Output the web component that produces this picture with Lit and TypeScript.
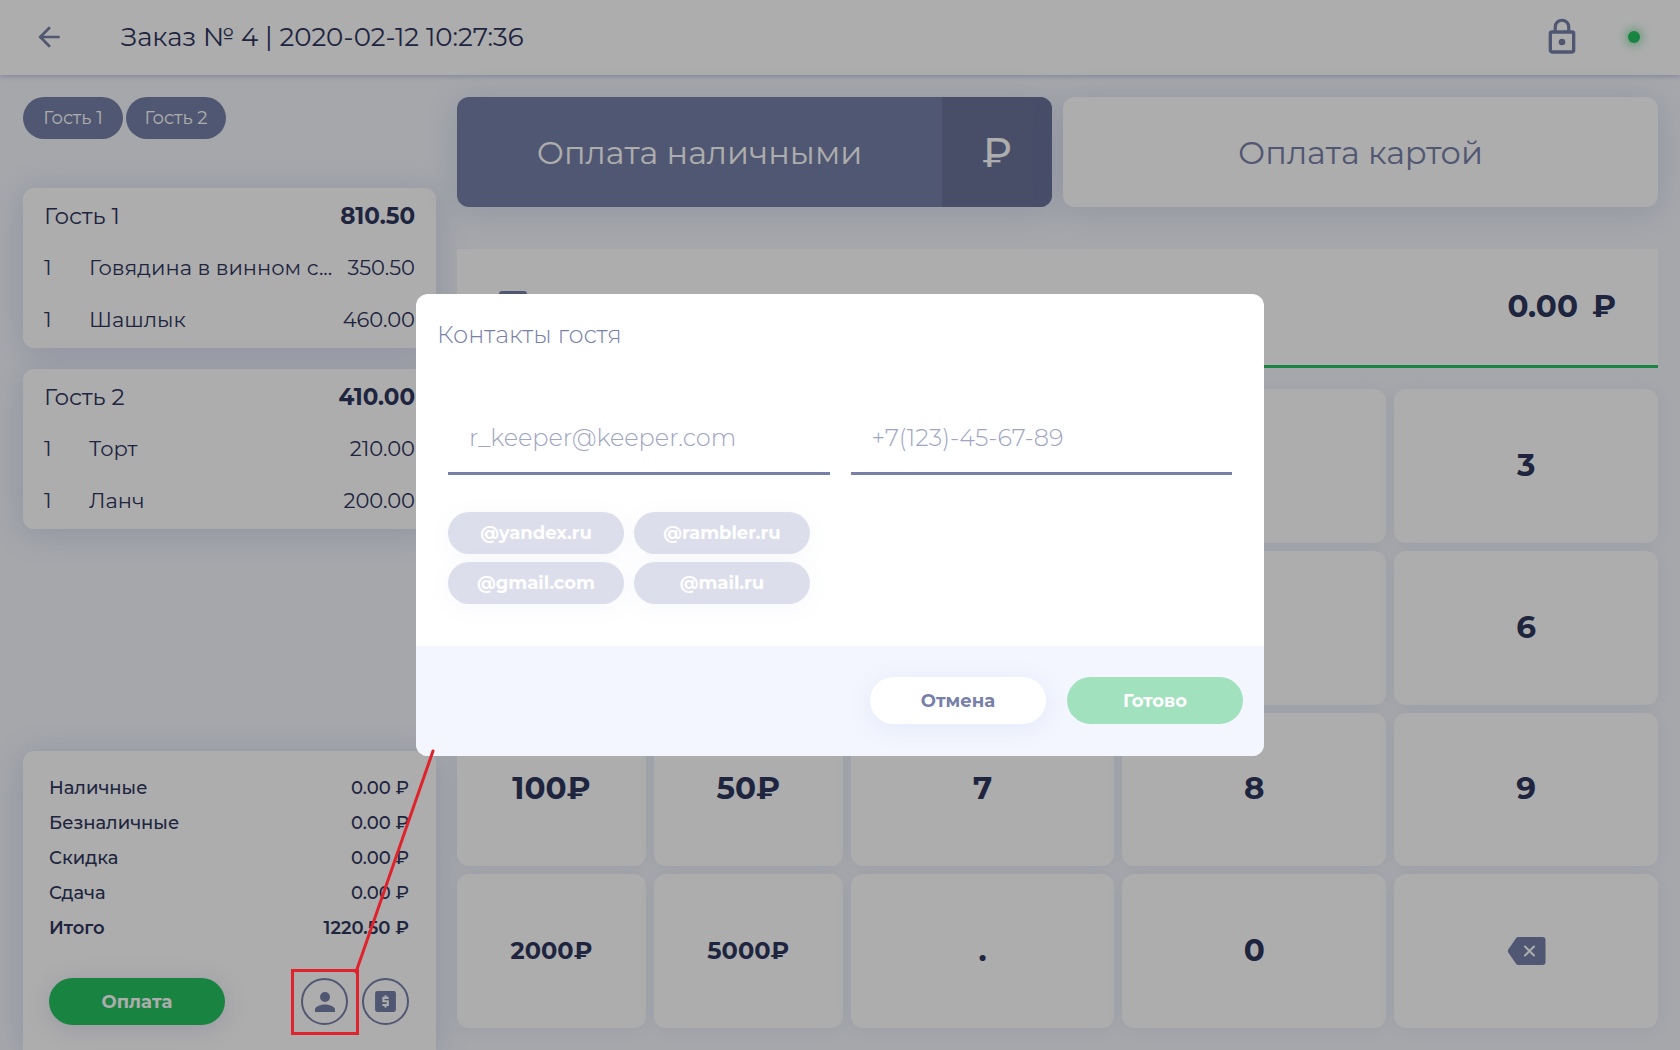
import { LitElement, html, css, svg, nothing } from "lit";
import { customElement, property, state } from "lit/decorators.js";
import { classMap } from "lit/directives/class-map.js";

interface OrderLine {
  qty: number;
  name: string;
  price: string;
}

interface Guest {
  name: string;
  total: string;
  lines: OrderLine[];
}

const GUESTS: Guest[] = [
  {
    name: "Гость 1",
    total: "810.50",
    lines: [
      { qty: 1, name: "Говядина в винном с...", price: "350.50" },
      { qty: 1, name: "Шашлык", price: "460.00" },
    ],
  },
  {
    name: "Гость 2",
    total: "410.00",
    lines: [
      { qty: 1, name: "Торт", price: "210.00" },
      { qty: 1, name: "Ланч", price: "200.00" },
    ],
  },
];

const TOTALS: [string, string][] = [
  ["Наличные", "0.00 ₽"],
  ["Безналичные", "0.00 ₽"],
  ["Скидка", "0.00 ₽"],
  ["Сдача", "0.00 ₽"],
  ["Итого", "1220.50 ₽"],
];

const KEYS: string[] = [
  "1000₽", "500₽", "1", "2", "3",
  "200₽", "10₽", "4", "5", "6",
  "100₽", "50₽", "7", "8", "9",
  "2000₽", "5000₽", ".", "0", "back",
];

const ICONS = {
  arrow: svg`<path d="M20 11H7.8l5.6-5.6L12 4l-8 8 8 8 1.4-1.4L7.8 13H20z" fill="currentColor"/>`,
  lock: svg`<path fill="currentColor" d="M12 17a2 2 0 1 0 0-4 2 2 0 0 0 0 4zm6-9h-1V6A5 5 0 0 0 7 6v2H6a2 2 0 0 0-2 2v10c0 1.1.9 2 2 2h12a2 2 0 0 0 2-2V10a2 2 0 0 0-2-2zM8.9 6a3.1 3.1 0 0 1 6.2 0v2H8.9zM18 20H6V10h12z"/>`,
  person: svg`<path fill="currentColor" d="M12 12a4 4 0 1 0 0-8 4 4 0 0 0 0 8zm0 2c-2.7 0-8 1.3-8 4v2h16v-2c0-2.7-5.3-4-8-4z"/>`,
  receipt: svg`<rect x="2" y="2" width="20" height="20" rx="2" fill="currentColor"/>
    <path d="M15 8.5H10V11.8h4.2v3.5H9M12 6v2.5M12 15.3v2.5" fill="none" stroke="#fff" stroke-width="2"/>`,
  backspace: svg`<path fill="currentColor" d="M11 0h24a3 3 0 0 1 3 3v22a3 3 0 0 1-3 3H11a3 3 0 0 1-2.5-1.3L.8 15.6a3 3 0 0 1 0-3.2L8.5 1.3A3 3 0 0 1 11 0z"/>
    <path d="M17.5 9.5l9 9M26.5 9.5l-9 9" stroke="#fff" stroke-width="2" stroke-linecap="round"/>`,
};

const shared = css`
  * {
    box-sizing: border-box;
  }
  button,
  input {
    font: inherit;
    color: inherit;
    border: 0;
    margin: 0;
    padding: 0;
    background: none;
  }
  button {
    cursor: pointer;
  }
  svg {
    display: block;
  }
`;

@customElement("guest-card")
class GuestCard extends LitElement {
  static styles = [
    shared,
    css`
      :host {
        display: block;
        background: #fff;
        border-radius: 11px;
        box-shadow: 0 4px 32px rgba(105, 115, 190, 0.22);
        padding: 0 21px 3px;
      }
      .lines {
        width: 100%;
        border-collapse: collapse;
        table-layout: fixed;
        font-size: 21px;
        white-space: nowrap;
      }
      .qty {
        width: 45px;
      }
      .sum {
        width: 80px;
      }
      td,
      th {
        height: 52px;
        padding: 0;
        text-align: left;
        font-weight: 400;
      }
      .head th,
      .head td {
        height: 53px;
        padding-top: 2px;
        font-size: 23px;
      }
      td.money {
        text-align: right;
      }
      .head td.money {
        font-weight: 700;
      }
    `,
  ];

  @property({ attribute: false }) guest!: Guest;

  render() {
    const g = this.guest;
    return html`<table class="lines">
      <colgroup>
        <col class="qty" />
        <col />
        <col class="sum" />
      </colgroup>
      <tr class="head">
        <th colspan="2">${g.name}</th>
        <td class="money">${g.total}</td>
      </tr>
      ${g.lines.map(
        (l) => html`<tr>
          <td>${l.qty}</td>
          <td>${l.name}</td>
          <td class="money">${l.price}</td>
        </tr>`
      )}
    </table>`;
  }
}

@customElement("contacts-dialog")
class ContactsDialog extends LitElement {
  static styles = [
    shared,
    css`
      :host {
        display: block;
        width: min(848px, 94%);
        background: #fff;
        border-radius: 12px;
        overflow: hidden;
      }
      .title {
        margin: 0;
        padding: 24px 21px 0;
        font-size: 24px;
        line-height: 34px;
        font-weight: 300;
        color: #7780a8;
      }
      .body {
        padding: 50px 32px 42px;
      }
      .fields {
        display: grid;
        grid-template-columns: 1fr 1fr;
        gap: 21px;
      }
      .field {
        width: 100%;
        height: 73px;
        padding: 0 21px;
        border-bottom: 3px solid #7880a8;
        font-size: 24px;
        font-weight: 300;
        color: #2e365e;
        outline: none;
      }
      .field::placeholder {
        color: #a0a5c4;
        opacity: 1;
      }
      .domains {
        display: grid;
        grid-template-columns: 176px 176px;
        gap: 8px 10px;
        margin-top: 37px;
      }
      .domain {
        height: 42px;
        border-radius: 21px;
        background: #dddeeb;
        color: #fff;
        font-size: 18px;
        font-weight: 700;
        box-shadow: 0 4px 24px rgba(105, 115, 190, 0.05);
      }
      .foot {
        display: flex;
        justify-content: flex-end;
        gap: 21px;
        padding: 31px 21px 32px;
        background: #f3f6fe;
      }
      .action {
        width: 176px;
        height: 47px;
        border-radius: 24px;
        font-size: 18px;
        font-weight: 700;
      }
      .cancel {
        background: #fff;
        color: #7780a8;
        box-shadow: 0 4px 24px rgba(105, 115, 220, 0.1);
      }
      .done {
        background: #a1e1be;
        color: #fff;
      }
    `,
  ];

  render() {
    return html`
      <h2 class="title">Контакты гостя</h2>
      <div class="body">
        <div class="fields">
          <input class="field" type="email" aria-label="Email" placeholder="r_keeper@keeper.com" />
          <input class="field" type="tel" aria-label="Телефон" placeholder="+7(123)-45-67-89" />
        </div>
        <div class="domains">
          ${["@yandex.ru", "@rambler.ru", "@gmail.com", "@mail.ru"].map(
            (d) => html`<button class="domain" type="button">${d}</button>`
          )}
        </div>
      </div>
      <div class="foot">
        <button class="action cancel" type="button">Отмена</button>
        <button class="action done" type="button">Готово</button>
      </div>
    `;
  }
}

@customElement("app-root")
class AppRoot extends LitElement {
  static styles = [
    shared,
    css`
      :host {
        display: flex;
        flex-direction: column;
        position: relative;
        height: 100vh;
        min-height: 960px;
        overflow: hidden;
        background: #f3f6fc;
        color: #2e365e;
        font-family: Montserrat, Inter, "Noto Sans", sans-serif;
      }
      .bar {
        display: flex;
        align-items: center;
        height: 75px;
        flex: none;
        padding: 0 40px 1px 32px;
        background: #fff;
        box-shadow: 0 2px 4px rgba(105, 115, 190, 0.3);
      }
      .back {
        margin-right: 55px;
        color: #7780a8;
      }
      .heading {
        flex: 1;
        margin: 0;
        font-size: 26px;
        font-weight: 400;
      }
      .lock {
        color: #7780a8;
        margin-right: 46px;
      }
      .online {
        width: 12px;
        height: 12px;
        border-radius: 50%;
        background: #26c161;
        box-shadow: 0 0 12px #26c161;
      }
      .main {
        flex: 1;
        min-height: 0;
        display: grid;
        grid-template-columns: minmax(0, 413fr) minmax(0, 1201fr);
        gap: 21px;
        padding: 0 22px 0 23px;
      }
      .order {
        display: flex;
        flex-direction: column;
        min-height: 0;
        padding-top: 22px;
      }
      .tabs {
        display: flex;
        gap: 3px;
        margin-bottom: 49px;
      }
      .tab {
        width: 100px;
        height: 42px;
        border-radius: 21px;
        background: #7780a8;
        color: #fff;
        font-size: 18px;
      }
      .guests {
        display: flex;
        flex-direction: column;
        gap: 21px;
        flex: 1;
      }
      .summary {
        padding: 19px 27px 25px 26px;
        background: #fff;
        border-radius: 11px 11px 0 0;
        box-shadow: 0 4px 32px rgba(105, 115, 190, 0.22);
      }
      .totals {
        width: 100%;
        border-collapse: collapse;
        font-size: 18px;
      }
      .totals th,
      .totals td {
        height: 35px;
        padding: 0;
        text-align: left;
        font-weight: 500;
      }
      .totals td {
        text-align: right;
      }
      .totals tr:last-child > * {
        font-weight: 600;
      }
      .actions {
        display: flex;
        align-items: center;
        gap: 14px;
        margin-top: 33px;
      }
      .pay {
        width: 176px;
        height: 47px;
        margin-right: auto;
        border-radius: 24px;
        background: #26c161;
        color: #fff;
        font-size: 18px;
        font-weight: 700;
        box-shadow: 0 4px 24px rgba(105, 115, 190, 0.2);
      }
      .round {
        display: grid;
        place-items: center;
        width: 47px;
        height: 47px;
        border: 2px solid #7780a8;
        border-radius: 50%;
        color: #7780a8;
      }
      .marked {
        position: relative;
      }
      .marker {
        position: absolute;
        z-index: 3;
        inset: -9px -11px -10px -10px;
        border: 3px solid #e0222c;
        pointer-events: none;
      }
      .leader {
        position: absolute;
        left: 100%;
        bottom: 100%;
        overflow: visible;
      }
      .payment {
        display: flex;
        flex-direction: column;
        min-height: 0;
        padding: 22px 0;
      }
      .methods {
        display: grid;
        grid-template-columns: 1fr 1fr;
        gap: 11px;
        margin-bottom: 42px;
      }
      .method {
        display: flex;
        height: 110px;
        border-radius: 12px;
        overflow: hidden;
        background: #fff;
        color: #7780a8;
        font-size: 32px;
        align-items: stretch;
        box-shadow: 0 4px 32px rgba(105, 115, 190, 0.2);
      }
      .method.active {
        background: #7780a8;
        color: #fff;
      }
      .method-name {
        flex: 1;
        display: grid;
        place-items: center;
      }
      .method-sign {
        width: 110px;
        display: grid;
        place-items: center;
        background: #6a739a;
        font-size: 40px;
        font-weight: 500;
      }
      .amount {
        display: flex;
        align-items: center;
        gap: 14px;
        height: 119px;
        padding: 0 42px 2px;
        background: #fff;
        border-bottom: 3px solid #26c161;
        font-size: 31px;
        font-weight: 700;
        margin-bottom: 21px;
      }
      .amount-icon {
        color: #7780a8;
      }
      .sum {
        flex: 1;
        min-width: 0;
        text-align: right;
      }
      .keys {
        flex: 1;
        display: grid;
        grid-template-columns: 189fr 189fr 264fr 264fr 264fr;
        grid-auto-rows: 1fr;
        gap: 8px;
      }
      .key {
        display: grid;
        place-items: center;
        padding-bottom: 2px;
        border-radius: 12px;
        background: #fff;
        font-size: 31px;
        font-weight: 700;
        box-shadow: 0 2px 16px rgba(105, 115, 190, 0.08);
      }
      .key.long {
        font-size: 24px;
      }
      .erase {
        padding: 0;
        color: #7780a8;
      }
      .veil {
        position: absolute;
        inset: 0;
        z-index: 2;
        display: grid;
        place-items: center;
        background: rgba(0, 0, 0, 0.32);
      }
    `,
  ];

  @state() private method = "cash";

  render() {
    return html`
      <header class="bar">
        <button class="back" type="button" aria-label="Назад">
          <svg width="34" height="32" viewBox="0 0 24 24">${ICONS.arrow}</svg>
        </button>
        <h1 class="heading">Заказ № 4 | 2020-02-12 10:27:36</h1>
        <button class="lock" type="button" aria-label="Блокировка">
          <svg width="40" height="40" viewBox="0 0 24 24">${ICONS.lock}</svg>
        </button>
        <span class="online"></span>
      </header>

      <main class="main">
        <section class="order">
          <nav class="tabs">
            ${GUESTS.map((g) => html`<button class="tab" type="button">${g.name}</button>`)}
          </nav>
          <div class="guests">
            ${GUESTS.map((g) => html`<guest-card .guest=${g}></guest-card>`)}
          </div>
          <div class="summary">
            <table class="totals">
              ${TOTALS.map(([k, v]) => html`<tr><th>${k}</th><td>${v}</td></tr>`)}
            </table>
            <div class="actions">
              <button class="pay" type="button">Оплата</button>
              <div class="marked">
                <button class="round" type="button" aria-label="Контакты гостя">
                  <svg width="30" height="30" viewBox="0 0 24 24">${ICONS.person}</svg>
                </button>
                <div class="marker">
                  <svg class="leader" width="77" height="221" viewBox="0 0 77 221">
                    <path d="M0 221L77 0" stroke="#e0222c" stroke-width="3" stroke-linecap="round" />
                  </svg>
                </div>
              </div>
              <button class="round" type="button" aria-label="Счёт">
                <svg width="25" height="25" viewBox="0 0 24 24">${ICONS.receipt}</svg>
              </button>
            </div>
          </div>
        </section>

        <section class="payment">
          <div class="methods">
            ${this.renderMethod("cash", "Оплата наличными")}
            ${this.renderMethod("card", "Оплата картой")}
          </div>
          <div class="amount">
            <svg class="amount-icon" width="28" height="30" viewBox="0 0 28 30">
              <rect width="28" height="30" rx="3" fill="currentColor" />
            </svg>
            <input class="sum" aria-label="Сумма" value="0.00" readonly />
            <span>₽</span>
          </div>
          <div class="keys">
            ${KEYS.map((k) =>
              k === "back"
                ? html`<button class="key erase" type="button" aria-label="Стереть">
                    <svg width="39" height="28" viewBox="0 0 38 28">${ICONS.backspace}</svg>
                  </button>`
                : html`<button class=${classMap({ key: true, long: k.length > 4 })} type="button">
                    ${k}
                  </button>`
            )}
          </div>
        </section>
      </main>

      <div class="veil">
        <contacts-dialog role="dialog" aria-modal="true"></contacts-dialog>
      </div>
    `;
  }

  private renderMethod(id: string, label: string) {
    const active = this.method === id;
    return html`<button
      class=${classMap({ method: true, active })}
      type="button"
      @click=${() => (this.method = id)}
    >
      <span class="method-name">${label}</span>
      ${active ? html`<span class="method-sign">₽</span>` : nothing}
    </button>`;
  }
}
